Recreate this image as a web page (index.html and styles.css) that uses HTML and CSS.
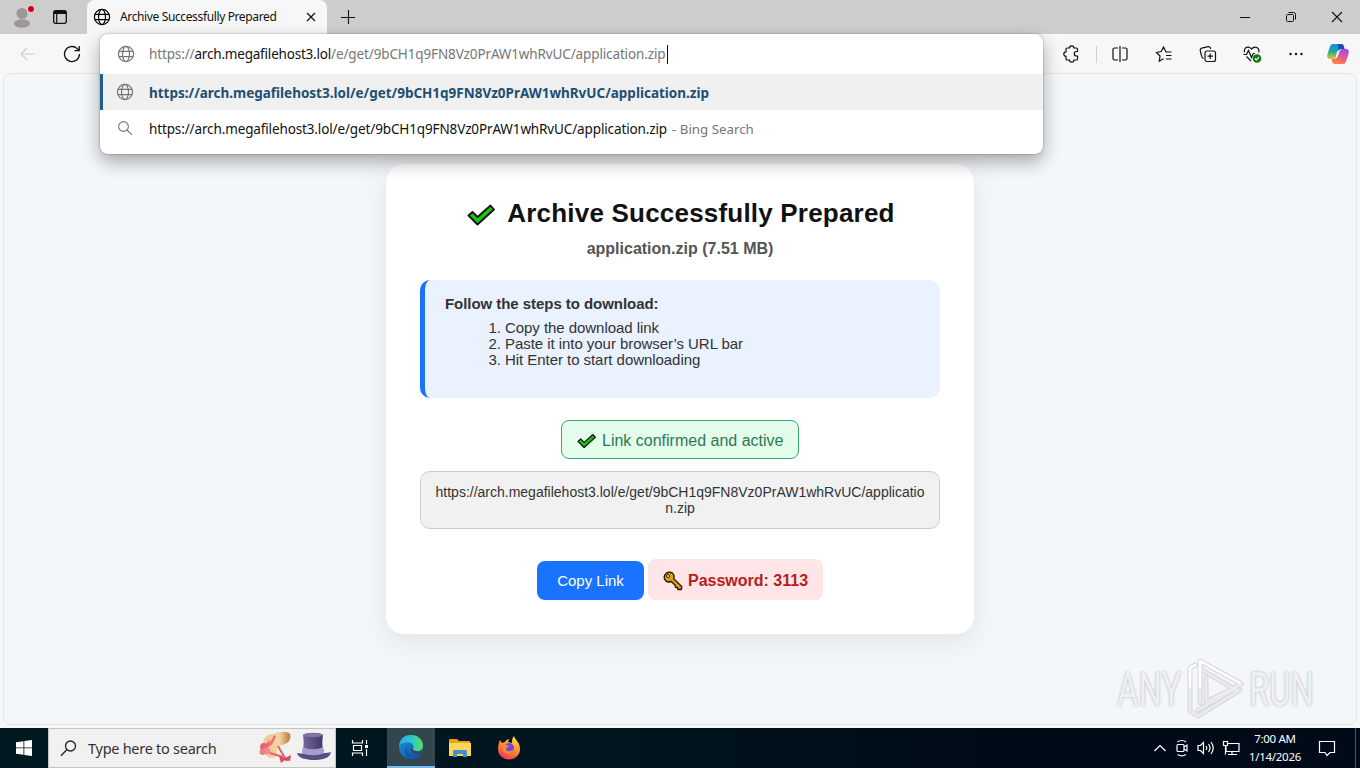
FILE: index.html
```html
<!DOCTYPE html>
<html lang="en">
<head>
  <meta charset="UTF-8">
  <meta name="viewport" content="width=device-width, initial-scale=1.0">
  <title>Archive Successfully Prepared</title>
  <link rel="stylesheet" href="styles.css">
</head>
<body>
  <!-- shared icons -->
  <svg class="defs" width="0" height="0">
    <symbol id="globe" viewBox="0 0 18 18">
      <g fill="none" stroke="currentColor" stroke-width="1.2">
        <circle cx="9" cy="9" r="7.6"/>
        <ellipse cx="9" cy="9" rx="3.5" ry="7.6"/>
        <path d="M2 6.3h14M2 11.7h14"/>
      </g>
    </symbol>
    <symbol id="check" viewBox="0 0 28 22">
      <path d="M1.500 11.500L5.500 8l5 5L23.500 1.500l3.500 4L10.500 20.500z" fill="#16c60c" stroke="#111" stroke-width="1.800" stroke-linejoin="round"/>
    </symbol>
  </svg>

  <div class="tab-bar">
    <svg class="profile" width="28" height="28" viewBox="0 0 28 28">
      <circle cx="14" cy="11.500" r="5.500" fill="#9b9896"/>
      <ellipse cx="14" cy="21.500" rx="8" ry="4.300" fill="#9b9896"/>
      <circle cx="23" cy="7" r="3.800" fill="#d9d9d9"/>
      <circle cx="23" cy="7" r="3" fill="#d0021b"/>
    </svg>
    <svg class="tab-actions" width="16" height="16" viewBox="0 0 16 16">
      <rect x="1.700" y="1.700" width="12.600" height="12.600" rx="2" fill="none" stroke="#111" stroke-width="1.300"/>
      <path d="M2 2h12v3H2z" fill="#111"/>
      <path d="M4.700 5v9" stroke="#111" stroke-width="1.200"/>
    </svg>
    <div class="tab">
      <svg class="tab-icon" width="18" height="18"><use href="#globe"/></svg>
      <span class="tab-title">Archive Successfully Prepared</span>
      <svg class="tab-close" width="10" height="10" viewBox="0 0 10 10"><path d="M1 1l8 8M9 1L1 9" stroke="#111" stroke-width="1.200"/></svg>
    </div>
    <svg class="new-tab" width="16" height="16" viewBox="0 0 16 16"><path d="M8.500 1v14M1 8.500h14" stroke="#111" stroke-width="1.100"/></svg>
    <div class="window-buttons">
      <svg width="12" height="12" viewBox="0 0 12 12"><path d="M1 6.500h10" stroke="#111"/></svg>
      <svg width="12" height="12" viewBox="0 0 12 12" fill="none" stroke="#111"><rect x="1.500" y="3.500" width="7" height="7" rx="1"/><path d="M3.500 1.500h5a2 2 0 0 1 2 2v5"/></svg>
      <svg width="12" height="12" viewBox="0 0 12 12"><path d="M1 1l10 10M11 1L1 11" stroke="#111" stroke-width="1.100"/></svg>
    </div>
  </div>

  <div class="toolbar">
    <svg class="back" width="18" height="16" viewBox="0 0 18 16" fill="none" stroke="#cfcfcf" stroke-width="1.200"><path d="M16 8H2M8 2L2 8l6 6"/></svg>
    <svg class="reload" width="18" height="18" viewBox="0 0 18 18" fill="none" stroke="#111" stroke-width="1.300"><path d="M16.500 9a7.500 7.500 0 1 1-2.300-5.400L16 5.500M16.200 1v4.700h-4.700"/></svg>
    <div class="toolbar-icons">
      <svg width="20" height="20" viewBox="0 0 20 20"><path d="M6 4h2.500a2.200 2.200 0 0 1 4.400 0H15.500q1 0 1 1v2.500h-1a2.200 2.200 0 0 0 0 4.500h1v3q0 1-1 1h-2.600a2.200 2.200 0 0 1-4.400 0H6q-1 0-1-1v-2.700a2.200 2.200 0 0 1 0-4.400V5q0-1 1-1z"/></svg>
      <span class="separator"></span>
      <svg width="20" height="20" viewBox="0 0 20 20"><path d="M8 4H4.500A1.500 1.500 0 0 0 3 5.500v9A1.500 1.500 0 0 0 4.500 16H8M12 4h3.500A1.500 1.500 0 0 1 17 5.500v9a1.500 1.500 0 0 1-1.500 1.500H12M10 2v16"/></svg>
      <svg width="20" height="20" viewBox="0 0 20 20"><path d="M17.500 8H12L9.500 3 7.200 7.500 2.500 8.500 6 12l-.7 5.200 4.200-2.500M12 11.500h5.500M12 15h5.500"/></svg>
      <svg width="20" height="20" viewBox="0 0 20 20"><rect x="7" y="7" width="10.500" height="10.500" rx="2"/><path d="M12.200 9.500v5.500M9.500 12.200h5.500M5.500 14.500C4 14 3.700 13 3.300 11L2.200 6.500c-.2-1.300.3-2 1.500-2.400l6.500-1.500c1.400-.2 2.300.4 2.600 2.200"/></svg>
      <svg width="20" height="20" viewBox="0 0 20 20"><path d="M2.500 8.500C1.500 5 4 2.800 6.500 3.200 8.300 3.500 9.500 5 9.500 5s1.500-1.800 3.500-1.800c3 0 4.700 2.500 3.700 5.300M1.500 10.500h3l2-4 3 7 1.800-4h1.500M4.500 12.500l4.500 4.500"/><circle cx="15" cy="14.500" r="4.300" fill="#107c10" stroke="none"/><path d="M13 14.500l1.400 1.400 2.600-2.700" stroke="#fff"/></svg>
      <svg width="20" height="20" viewBox="0 0 20 20"><g fill="#111" stroke="none"><circle cx="4.500" cy="10" r="1.200"/><circle cx="10" cy="10" r="1.200"/><circle cx="15.500" cy="10" r="1.200"/></g></svg>
    </div>
    <svg class="copilot" width="24" height="24" viewBox="0 0 24 24">
      <defs>
        <linearGradient id="cpA" x1="0" y1="0" x2="0" y2="1"><stop offset="0" stop-color="#138fe8"/><stop offset=".5" stop-color="#20a7a0"/><stop offset="1" stop-color="#e7c720"/></linearGradient>
        <linearGradient id="cpB" x1="0.500" y1="0" x2="0.200" y2="1"><stop offset="0" stop-color="#a04ce8"/><stop offset=".5" stop-color="#ed5a8b"/><stop offset="1" stop-color="#fa8a3c"/></linearGradient>
      </defs>
      <path d="M7 2h8c2 0 2.500 1 3 3l.5 2h-3c-2 0-3 .7-3.600 2.700l-1.800 5C9.500 16.500 8.500 17 7 17H4c-2.500 0-3.300-2-2.600-4.500L3.800 5C4.400 3 5.400 2 7 2z" fill="url(#cpA)"/>
      <path d="M12 2h3c2 0 2.500 1 3 3l.5 2h-3c-1.500 0-2.500.5-3 1.700z" fill="#174fae"/>
      <path d="M17 22H9c-2 0-2.500-1-3-3l-.5-2H8c2 0 3-.7 3.700-2.700l1.800-5C14.200 7.500 15.500 7 17 7h3c2.500 0 3.300 2 2.600 4.500L20.200 19c-.6 2-1.600 3-3.200 3z" fill="url(#cpB)"/>
      <path d="M11.200 9.200h2.300l-2 5.600H9.800z" fill="#f7f7f7"/>
    </svg>
  </div>

  <!-- address bar dropdown -->
  <div class="omnibox">
    <div class="omnibox-row input-row">
      <svg width="18" height="18"><use href="#globe"/></svg>
      <span class="url">https://<b>arch.megafilehost3.lol</b>/e/get/9bCH1q9FN8Vz0PrAW1whRvUC/application.zip</span><span class="caret"></span>
    </div>
    <div class="omnibox-row selected">
      <svg width="18" height="18"><use href="#globe"/></svg>
      <span class="url-bold">https://arch.megafilehost3.lol/e/get/9bCH1q9FN8Vz0PrAW1whRvUC/application.zip</span>
    </div>
    <div class="omnibox-row">
      <svg width="18" height="18" viewBox="0 0 18 18" fill="none" stroke="currentColor" stroke-width="1.100"><circle cx="7.500" cy="7.500" r="4.900"/><path d="M11 11l5 4.800"/></svg>
      <span class="url-plain">https://arch.megafilehost3.lol/e/get/9bCH1q9FN8Vz0PrAW1whRvUC/application.zip</span>
      <span class="engine">- Bing Search</span>
    </div>
  </div>

  <div class="page">
    <div class="card">
      <h1><svg width="28" height="22"><use href="#check"/></svg><span>Archive Successfully Prepared</span></h1>
      <div class="file-name">application.zip (7.51 MB)</div>
      <div class="steps">
        <strong>Follow the steps to download:</strong>
        <ol>
          <li>Copy the download link</li>
          <li>Paste it into your browser’s URL bar</li>
          <li>Hit Enter to start downloading</li>
        </ol>
      </div>
      <div class="status"><svg width="19" height="16"><use href="#check"/></svg><span>Link confirmed and active</span></div>
      <div class="link-box">https://arch.megafilehost3.lol/e/get/9bCH1q9FN8Vz0PrAW1whRvUC/application.zip</div>
      <div class="actions">
        <button class="copy-button">Copy Link</button>
        <div class="password">
          <svg width="20" height="20" viewBox="0 0 20 20">
            <path d="M3 2.500C5.500.5 9 1 10.500 3.500c.8 1.500.7 3 .2 4.300l8 7.700-.2 3H15l-.5-2-2-.3-.3-2-3.900-3.700C5.500 11.600 2.800 10.500 1.700 8.200.8 6 1.300 4 3 2.500z" fill="#e5a00d" stroke="#2b1d00" stroke-width="1.400" stroke-linejoin="round"/>
            <circle cx="5" cy="5" r="1.500" fill="#fff" stroke="#2b1d00"/>
          </svg>
          <span>Password: 3113</span>
        </div>
      </div>
    </div>

    <div class="watermark">
      <span>ANY</span>
      <svg width="58" height="64" viewBox="0 0 58 64">
        <g fill="none" stroke-linejoin="round" stroke-linecap="round">
          <path d="M9 8L4 11v43l8 5M14 46V4l40 22M14 12l36 21M20 20v25l35-18M12 59l42-26M12 53l38-22" stroke="#c6c9cc" stroke-width="5" opacity=".6"/>
          <path d="M9 8L4 11v43l8 5M14 46V4l40 22M14 12l36 21M20 20v25l35-18M12 59l42-26M12 53l38-22" stroke="#eaecee" stroke-width="2.500"/>
          <path d="M4 30V11l5-3M14 30V4l40 22" stroke="#fff" stroke-width="2.500"/>
        </g>
      </svg>
      <span>RUN</span>
    </div>
  </div>

  <div class="taskbar">
    <div class="start">
      <svg width="16" height="16" viewBox="0 0 16 16" fill="#fff"><path d="M0 2.200l7.500-1v6.300H0zM8.300 1.100L16 0v7.500H8.300zM0 8.300h7.500v6.400L0 13.700zM8.300 8.300H16V16l-7.700-1.100z"/></svg>
    </div>
    <div class="search">
      <svg class="search-icon" width="17" height="17" viewBox="0 0 17 17" fill="none" stroke="#222" stroke-width="1.300"><circle cx="10.500" cy="6" r="5"/><path d="M7 9.500L1 15.800"/></svg>
      <span>Type here to search</span>
      <svg class="hats" width="74" height="36" viewBox="0 0 74 36">
        <defs>
          <linearGradient id="hat" x1="0" x2="1"><stop offset="0" stop-color="#756797"/><stop offset=".5" stop-color="#5e5084"/><stop offset="1" stop-color="#40345f"/></linearGradient>
          <linearGradient id="straw" x1="0" x2="1"><stop offset="0" stop-color="#f5c98c"/><stop offset=".6" stop-color="#f2d3a0"/><stop offset="1" stop-color="#b87838"/></linearGradient>
        </defs>
        <path d="M5 14C5 7 10 3 16 4c4-3 14-3 16 0 2 6-3 10-8 11-2 0-4 0-5 3 0 6 0 9-4 10-6 1-10-5-10-14z" fill="url(#straw)"/>
        <path d="M10 6c1 4 0 7-4 9l1 3c6-1 8-4 11-12l-2-1c-2 5-4 7-5 7z" fill="#e9707c"/>
        <circle cx="6" cy="17" r="4" fill="#e8636f"/>
        <circle cx="9" cy="21" r="3.500" fill="#f08c94"/>
        <circle cx="4.500" cy="22" r="3" fill="#ef7f88"/>
        <path d="M20 16l4 7 5 8M12 23l13 4" fill="none" stroke="#df626f" stroke-width="2"/>
        <path d="M21 26l6 2 6-3-1 6-5-1-4 3z" fill="#d84d5c"/>
        <path d="M39 23c5 1 28 1 34-1-1 6-8 8-17 8-8 0-16-2-17-7z" fill="#5a4e80"/>
        <path d="M45 5c5-3 16-3 20 0-1 7-1 12 1 16-6 5-16 5-22 1 2-5 2-10 1-17z" fill="url(#hat)"/>
        <path d="M45 17c6 3 14 3 20 0l1 6c-6 3-16 3-22 0z" fill="#a69bd2"/>
        <ellipse cx="55" cy="5" rx="10" ry="2" fill="#8175a3"/>
      </svg>
    </div>
    <div class="task task-view">
      <svg width="18" height="18" viewBox="0 0 18 18" fill="none" stroke="#fff" stroke-width="1.200"><path d="M1.500 1v3h10V1M1.500 17v-3h10v3M2.500 6.500h8v5h-8zM15.500 1v4M15.500 10v7"/><path d="M14 6h3v3h-3z" fill="#fff" stroke="none"/></svg>
    </div>
    <div class="task active">
      <svg width="26" height="26" viewBox="0 0 26 26">
        <defs>
          <linearGradient id="edgeTop" x1="0" x2="1"><stop offset="0" stop-color="#2aa9e3"/><stop offset=".5" stop-color="#2bc5cc"/><stop offset="1" stop-color="#5fdc65"/></linearGradient>
          <linearGradient id="edgeLow" x1="0" y1="0" x2="1" y2="1"><stop offset="0" stop-color="#1995dd"/><stop offset="1" stop-color="#0c4ea0"/></linearGradient>
        </defs>
        <circle cx="13" cy="13" r="12" fill="url(#edgeLow)"/>
        <path d="M1 12C2 4 7 1 13 1c7 0 12 5 12 10.500 0 4-3 6-6.500 6-3 0-4.500-1.300-4-2.500 2-2 1-6-3.500-6.500C6 8 2 10 1 12z" fill="url(#edgeTop)"/>
        <path d="M10 11c-3 4 0 10 6 10 3 0 6-1 7.500-2-2 4-6 6-10 6C7 24.500 5 17 10 11z" fill="#1259ab"/>
        <path d="M14.500 15c1 2 5 3 9.500 1.500L23 19c-4 2-9 1-10-2-.5-2 0-3.500 0-3.500z" fill="#384850"/>
      </svg>
    </div>
    <div class="task">
      <svg width="22" height="20" viewBox="0 0 22 20">
        <path d="M0 2q0-1 1-1h7l2 2h11v4H0z" fill="#e9a11f"/>
        <path d="M0 5h22v13H0z" fill="#ffd65c"/>
        <path d="M4 19v-6q0-1 1-1h12q1 0 1 1v6h-4v-3H8v3z" fill="#3f94d0"/>
      </svg>
    </div>
    <div class="task">
      <svg width="24" height="24" viewBox="0 0 24 24">
        <defs><linearGradient id="fox" x1=".8" y1="0" x2=".3" y2="1"><stop offset="0" stop-color="#ffe34a"/><stop offset=".5" stop-color="#ff9129"/><stop offset="1" stop-color="#f5305c"/></linearGradient></defs>
        <path d="M3 4l2 3 3-1c1-2 3-3 4-3l-1 3 4 1c0-3 0-5 2-7 1 4 6 6 6 13 0 6-5 10.500-11 10.500S.8 19 1 13c0-4 1-6 2-9z" fill="url(#fox)"/>
        <circle cx="12" cy="12" r="5" fill="#7647df"/>
        <path d="M5 9c3-2 5 0 7 1-1 2-3 1-3 3 0 3 5 3 8 0-1 5-9 6-11 2-1-2-1-4-1-6z" fill="#ff8b2b"/>
      </svg>
    </div>
    <div class="tray">
      <svg width="14" height="16" viewBox="0 0 14 16"><path d="M1.500 11L7 5.500l5.500 5.500"/></svg>
      <svg width="16" height="18" viewBox="0 0 16 18"><rect x="3" y="5.500" width="7" height="7" rx="1"/><path d="M10 8l3-2v6l-3-2M3.500 3C6 1 10 1 12 3M3.500 15.500c2.500 1.500 6 1.500 8.500 0"/></svg>
      <svg width="18" height="16" viewBox="0 0 18 16"><path d="M1 5.500h2.500L6.500 2.500v11l-3-3H1zM9 6q1.500 2 0 4M11.500 4q3 4 0 8M14 2q4.500 6 0 12"/></svg>
      <svg width="18" height="16" viewBox="0 0 18 16"><path d="M6 3.500h11v8H4v-5M10 11.500v3M6 14.500h9M1.500 1.500h4v4h-4zM3.500 5.500v9"/></svg>
    </div>
    <div class="clock"><span>7:00 AM</span><span>1/14/2026</span></div>
    <svg class="notice" width="18" height="18" viewBox="0 0 18 18"><path d="M1.500 2.500h15v11H12L9 16.500l-2-3H1.500z" fill="none" stroke="#fff" stroke-width="1.200"/></svg>
    <span class="show-desktop"></span>
  </div>
</body>
</html>
```

FILE: styles.css
```css
* {
  box-sizing: border-box;
}

body {
  margin: 0;
  width: 1360px;
  height: 768px;
  display: flex;
  flex-direction: column;
  overflow: hidden;
  position: relative;
  background-color: #f7f7f7;
  font-family: "Noto Sans", "Open Sans", sans-serif;
}

svg {
  flex-shrink: 0;
}

.defs {
  position: absolute;
}

/* browser window */
.tab-bar {
  height: 34px;
  flex-shrink: 0;
  display: flex;
  align-items: center;
  background-color: #cdcdcd;
}

.profile {
  align-self: flex-start;
  margin: 2px 0 0 8px;
}

.tab-actions {
  margin-left: 16px;
}

.tab {
  width: 240px;
  height: 34px;
  margin-left: 19px;
  padding: 0 11px 0 6px;
  display: flex;
  align-items: center;
  background-color: #f7f7f7;
  border-radius: 8px 8px 0 0;
}

.tab-title {
  margin-left: 9px;
  flex: 1;
  font-size: 12px;
  letter-spacing: -0.37px;
  line-height: 16px;
  padding-bottom: 1px;
  white-space: nowrap;
  color: #111;
}

.new-tab {
  margin-left: 13px;
}

.window-buttons {
  margin-left: auto;
  margin-right: 17px;
  display: flex;
  gap: 34px;
}

.toolbar {
  height: 39px;
  flex-shrink: 0;
  display: flex;
  align-items: center;
  padding: 1px 10px 0 19px;
}

.reload {
  margin-left: 26px;
}

.toolbar-icons {
  margin-left: auto;
  display: flex;
  align-items: center;
  gap: 24px;
  fill: none;
  stroke: #111;
  stroke-width: 1.2;
}

.separator {
  width: 1px;
  height: 17px;
  margin: 0 -11px 0 -9px;
  background-color: #cfcfcf;
}

.copilot {
  margin-left: 20px;
}

.omnibox {
  position: absolute;
  left: 100px;
  top: 34px;
  width: 943px;
  height: 120px;
  z-index: 2;
  background-color: #fff;
  border-radius: 8px;
  box-shadow: 0 0 2px rgba(0, 0, 0, 0.4), 0 8px 18px rgba(0, 0, 0, 0.32);
  font-size: 13.5px;
  color: #767676;
}

.omnibox-row {
  height: 36px;
  padding-left: 16px;
  display: flex;
  align-items: center;
  white-space: nowrap;
}

.omnibox-row svg {
  margin-right: 15px;
}

.omnibox-row span {
  padding-top: 2px;
}

.input-row {
  height: 40px;
  padding-left: 17px;
}

.input-row svg {
  margin-right: 14px;
}

.input-row .url {
  padding-top: 0;
}

.url b {
  font-weight: normal;
  letter-spacing: -0.2px;
  color: #111;
}

.url,
.url-plain {
  width: 518px;
  letter-spacing: -0.13px;
}

.url-plain {
  color: #111;
}

.caret {
  width: 1px;
  height: 19px;
  background-color: #111;
}

.selected {
  padding-left: 13px;
  border-left: 3px solid #1f5f8b;
  background-color: #f0f0f0;
}

.url-bold {
  font-weight: bold;
  letter-spacing: -0.01px;
  color: #1c4f74;
}

.engine {
  margin-left: 5px;
  font-size: 13.3px;
}

/* page content */
.page {
  width: 1354px;
  height: 652px;
  flex-shrink: 0;
  margin: 0 0 3px 3px;
  padding-top: 90px;
  position: relative;
  background-color: #f4f7fa;
  border: 1px solid #e3e4e6;
  border-radius: 8px;
  font-family: "Liberation Sans", Arial, sans-serif;
}

.card {
  width: 588px;
  height: 470px;
  margin: 0 auto;
  padding: 34px;
  display: flex;
  flex-direction: column;
  align-items: center;
  background-color: #fff;
  border-radius: 18px;
  box-shadow: 0 8px 30px rgba(0, 0, 0, 0.08);
  text-align: center;
}

h1 {
  margin: 0;
  height: 30px;
  padding-left: 2px;
  display: flex;
  align-items: center;
  gap: 12px;
  font-size: 26px;
  line-height: 30px;
  letter-spacing: 0.2px;
  color: #111;
}

h1 svg {
  margin-top: 4px;
}

.file-name {
  margin-top: 12px;
  font-size: 16px;
  line-height: 18px;
  font-weight: bold;
  color: #555;
}

.steps {
  width: 520px;
  height: 118px;
  margin-top: 22px;
  padding: 15px 20px;
  background-color: #eaf1ff;
  border-left: 5px solid #1a73f5;
  border-radius: 10px;
  text-align: left;
  font-size: 15px;
  line-height: 17px;
  color: #333;
}

.steps strong {
  display: block;
  letter-spacing: -0.05px;
}

.steps ol {
  margin: 8px 0 0 20px;
  padding-left: 40px;
  letter-spacing: -0.05px;
  line-height: 16px;
}

.status {
  width: 238px;
  height: 39px;
  margin-top: 22px;
  padding: 2px 0 0 15px;
  display: flex;
  align-items: center;
  gap: 6px;
  border: 1px solid #3aa76d;
  border-radius: 8px;
  background-color: #e3fcec;
  font-size: 16px;
  white-space: nowrap;
  color: #2c7a51;
}

.link-box {
  width: 520px;
  height: 58px;
  margin-top: 12px;
  padding: 12px 14px;
  border: 1px solid #ccc;
  border-radius: 10px;
  background-color: #f1f1f1;
  font-size: 14px;
  line-height: 16px;
  word-break: break-all;
  color: #333;
}

.actions {
  margin-top: 30px;
  display: flex;
  align-items: flex-end;
  gap: 4px;
}

.copy-button {
  width: 107px;
  height: 39px;
  padding: 0;
  border: none;
  border-radius: 8px;
  background-color: #1a73ff;
  font-family: inherit;
  font-size: 15px;
  color: #fff;
}

.password {
  width: 175px;
  height: 41px;
  padding: 2px 0 0 15px;
  display: flex;
  align-items: center;
  gap: 5px;
  border-radius: 8px;
  background-color: #ffe5e7;
  font-size: 16px;
  font-weight: bold;
  white-space: nowrap;
  color: #b71c1c;
}

.watermark {
  position: absolute;
  right: 43px;
  bottom: 3px;
  display: flex;
  align-items: center;
  gap: 5px;
  font-family: Roboto, sans-serif;
  font-size: 49px;
  color: #eef0f2;
  text-shadow: 0 0 3px #a9adb1;
}

.watermark span {
  width: 64px;
  transform: scaleX(0.67);
  transform-origin: left;
}

/* windows taskbar */
.taskbar {
  height: 40px;
  flex-shrink: 0;
  display: flex;
  align-items: center;
  background: linear-gradient(90deg, #001820, #001520 45%, #000a18 75%, #000a18);
  color: #fff;
}

.start {
  width: 48px;
  height: 40px;
  display: flex;
  align-items: center;
  justify-content: center;
}

.search {
  width: 288px;
  height: 40px;
  padding: 0 3px 0 11px;
  display: flex;
  align-items: center;
  border: 1px solid #c4c4c4;
  background-color: #f1f1f1;
  font-size: 14.5px;
  letter-spacing: -0.27px;
  white-space: nowrap;
  color: #333;
}

.search-icon {
  margin-right: 11px;
}

.hats {
  margin-left: auto;
}

.task {
  width: 49px;
  height: 40px;
  display: flex;
  align-items: center;
  justify-content: center;
}

.task-view {
  width: 51px;
  padding-right: 3px;
}

.active {
  width: 48px;
  background-color: #34464d;
  border-bottom: 2px solid #76b9ed;
}

.tray {
  margin-left: auto;
  display: flex;
  align-items: center;
  gap: 7px;
  fill: none;
  stroke: #fff;
  stroke-width: 1.2;
}

.clock {
  width: 66px;
  margin-left: 2px;
  display: flex;
  flex-direction: column;
  align-items: center;
  font-size: 11.5px;
  line-height: 18px;
  letter-spacing: -0.3px;
}

.notice {
  margin-left: 10px;
}

.show-desktop {
  width: 5px;
  height: 40px;
  margin-left: 19px;
  border-left: 1px solid #4c545f;
}
```
